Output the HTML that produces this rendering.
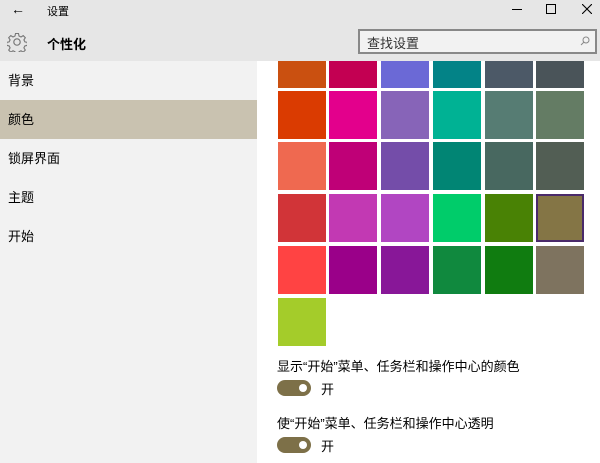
<!DOCTYPE html><html><head><meta charset="utf-8"><style>
body{margin:0;width:600px;height:463px;overflow:hidden;background:#fff;font-family:"Liberation Sans","Noto Sans CJK SC",sans-serif;position:relative}
.a{position:absolute}
.hdr{left:0;top:0;width:600px;height:61px;background:#e6e6e6}
.side{left:0;top:61px;width:257px;height:402px;background:#f2f2f2}
.it{left:0;width:257px;height:39px;font-size:13px;line-height:39px;padding-left:8px;box-sizing:border-box;color:#000}
.sw{width:48px;height:48px}
.tg{width:34px;height:16px;border-radius:8px;background:#7d7048}
.tg:after{content:"";position:absolute;right:4px;top:4px;width:8px;height:8px;border-radius:50%;background:#fff}
.t{font-size:13px;color:#000}
</style></head><body>
<div class="a hdr"></div>
<div class="a" style="left:11px;top:1px;font-size:14px">←</div>
<div class="a" style="left:47px;top:3px;font-size:11px">设置</div>
<div class="a" style="left:512px;top:9px;width:10px;height:1px;background:#000"></div>
<div class="a" style="left:546px;top:4px;width:8px;height:8px;border:1px solid #000"></div>
<svg class="a" style="left:582px;top:4px" width="10" height="10"><path d="M0 0L10 10M10 0L0 10" stroke="#000" stroke-width="1.1"/></svg>
<svg class="a" style="left:7px;top:32px" width="20" height="20" viewBox="0 0 20 20"><circle cx="10" cy="10" r="3.2" fill="none" stroke="#777" stroke-width="1.2"/><path d="M8.5 1.5h3l.5 2.5 2 1 2.2-1.4 2.1 2.1-1.4 2.2 1 2 2.5.5v3l-2.5.5-1 2 1.4 2.2-2.1 2.1-2.2-1.4-2 1-.5 2.5h-3l-.5-2.5-2-1-2.2 1.4-2.1-2.1 1.4-2.2-1-2-2.5-.5v-3l2.5-.5 1-2-1.4-2.2 2.1-2.1 2.2 1.4 2-1z" fill="none" stroke="#777" stroke-width="1.1"/></svg>
<div class="a" style="left:47px;top:34px;font-size:13px;font-weight:bold">个性化</div>
<div class="a" style="left:358px;top:29px;width:239px;height:25px;border:2px solid #888;box-sizing:border-box;background:#f2f2f2"></div>
<div class="a" style="left:367px;top:33px;font-size:13px;color:#333">查找设置</div>
<svg class="a" style="left:580px;top:36px" width="10" height="10"><circle cx="6" cy="4" r="3" fill="none" stroke="#888"/><path d="M4 6L1 9" stroke="#888"/></svg>
<div class="a side"></div>
<div class="a it" style="top:61px">背景</div>
<div class="a it" style="top:100px;background:#c9c2b0">颜色</div>
<div class="a it" style="top:139px">锁屏界面</div>
<div class="a it" style="top:178px">主题</div>
<div class="a it" style="top:217px">开始</div>
<div class="a" style="left:278px;top:61px;width:310px;height:27px;overflow:hidden">
<div class="a sw" style="left:0;top:-21px;background:#ca5010"></div><div class="a sw" style="left:51px;top:-21px;background:#c30052"></div><div class="a sw" style="left:103px;top:-21px;background:#6b69d6"></div><div class="a sw" style="left:155px;top:-21px;background:#038387"></div><div class="a sw" style="left:207px;top:-21px;background:#4c5967"></div><div class="a sw" style="left:258px;top:-21px;background:#4a5459"></div></div>
<div class="a sw" style="left:278px;top:91px;background:#da3b01"></div><div class="a sw" style="left:329px;top:91px;background:#e3008c"></div><div class="a sw" style="left:381px;top:91px;background:#8764b8"></div><div class="a sw" style="left:433px;top:91px;background:#00b294"></div><div class="a sw" style="left:485px;top:91px;background:#567c73"></div><div class="a sw" style="left:536px;top:91px;background:#647c64"></div>
<div class="a sw" style="left:278px;top:142px;background:#ef6950"></div><div class="a sw" style="left:329px;top:142px;background:#bf0077"></div><div class="a sw" style="left:381px;top:142px;background:#744da9"></div><div class="a sw" style="left:433px;top:142px;background:#018574"></div><div class="a sw" style="left:485px;top:142px;background:#486860"></div><div class="a sw" style="left:536px;top:142px;background:#525e54"></div>
<div class="a sw" style="left:278px;top:194px;background:#d13438"></div><div class="a sw" style="left:329px;top:194px;background:#c239b3"></div><div class="a sw" style="left:381px;top:194px;background:#b146c2"></div><div class="a sw" style="left:433px;top:194px;background:#00cc6a"></div><div class="a sw" style="left:485px;top:194px;background:#498205"></div><div class="a sw" style="left:536px;top:194px;background:#847545;box-sizing:border-box;border:2px solid #4a2a6a"></div>
<div class="a sw" style="left:278px;top:246px;background:#ff4343"></div><div class="a sw" style="left:329px;top:246px;background:#9a0089"></div><div class="a sw" style="left:381px;top:246px;background:#881798"></div><div class="a sw" style="left:433px;top:246px;background:#10893e"></div><div class="a sw" style="left:485px;top:246px;background:#107c10"></div><div class="a sw" style="left:536px;top:246px;background:#7e735f"></div>
<div class="a sw" style="left:278px;top:298px;background:#a4cc2a"></div>
<div class="a t" style="left:277px;top:356px">显示“开始”菜单、任务栏和操作中心的颜色</div>
<div class="a tg" style="left:277px;top:380px"></div><div class="a t" style="left:321px;top:379px">开</div>
<div class="a t" style="left:277px;top:413px">使“开始”菜单、任务栏和操作中心透明</div>
<div class="a tg" style="left:277px;top:437px"></div><div class="a t" style="left:321px;top:436px">开</div>
</body></html>
